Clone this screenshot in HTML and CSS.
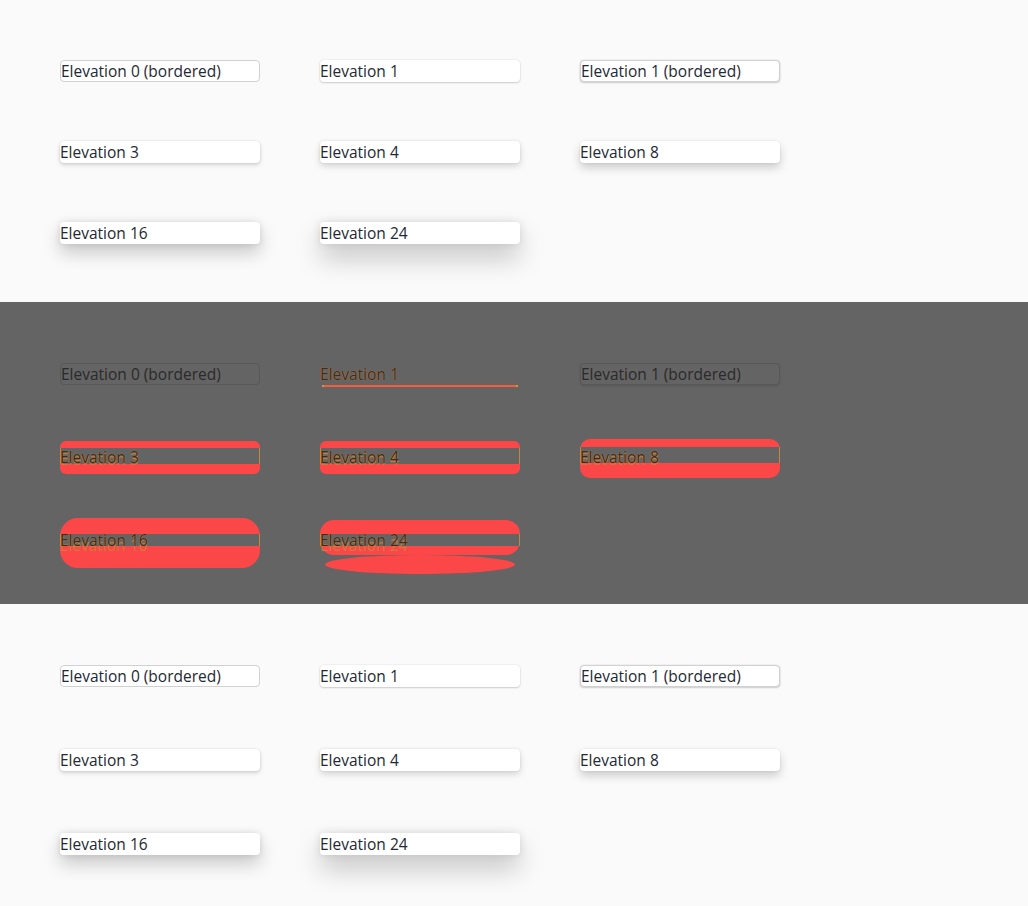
FILE: index.html
```html
<!DOCTYPE html>
<html>
<head>
<meta charset="utf-8">
<link rel="stylesheet" href="styles.css">
</head>
<body>
<section class="panel panel-top">
  <div class="grid">
    <div class="card bordered">Elevation 0 (bordered)</div>
    <div class="card e1">Elevation 1</div>
    <div class="card bordered e1">Elevation 1 (bordered)</div>
    <div class="card e3">Elevation 3</div>
    <div class="card e4">Elevation 4</div>
    <div class="card e8">Elevation 8</div>
    <div class="card e16">Elevation 16</div>
    <div class="card e24">Elevation 24</div>
  </div>
</section>
<section class="panel panel-diff">
  <div class="grid grid-diff">
    <div class="dcard dbordered"><span class="dlabel">Elevation 0 (bordered)</span></div>
    <div class="dcard d1"><span class="dlabel warm">Elevation 1</span><span class="dline"></span></div>
    <div class="dcard dbordered dshadow"><span class="dlabel">Elevation 1 (bordered)</span></div>
    <div class="dcard d3"><span class="red"></span><span class="band"></span><span class="dlabel warm ghosted">Elevation 3</span></div>
    <div class="dcard d4"><span class="red"></span><span class="band"></span><span class="dlabel warm ghosted">Elevation 4</span></div>
    <div class="dcard d8"><span class="red"></span><span class="band"></span><span class="dlabel warm ghosted">Elevation 8</span></div>
    <div class="dcard d16"><span class="red"></span><span class="band"></span><span class="dlabel warm ghosted2">Elevation 16</span></div>
    <div class="dcard d24"><span class="red"></span><span class="red2"></span><span class="band"></span><span class="dlabel warm ghosted2">Elevation 24</span></div>
  </div>
</section>
<section class="panel panel-bottom">
  <div class="grid grid-bottom">
    <div class="card bordered">Elevation 0 (bordered)</div>
    <div class="card e1">Elevation 1</div>
    <div class="card bordered e1">Elevation 1 (bordered)</div>
    <div class="card e3">Elevation 3</div>
    <div class="card e4">Elevation 4</div>
    <div class="card e8">Elevation 8</div>
    <div class="card e16">Elevation 16</div>
    <div class="card e24">Elevation 24</div>
  </div>
</section>
</body>
</html>
```

FILE: styles.css
```css
html, body {
  margin: 0;
  padding: 0;
}
body {
  width: 1028px;
  font-family: "Open Sans", "Noto Sans", sans-serif;
  font-size: 15.5px;
  color: #242424;
}
.panel {
  height: 302px;
  box-sizing: border-box;
  overflow: hidden;
}
.panel-top, .panel-bottom {
  background: #fafafa;
}
.panel-top {
  padding: 60px 0 0 60px;
}
.panel-diff {
  background: #646464;
  padding: 61px 0 0 60px;
}
.panel-bottom {
  padding: 61px 0 0 60px;
}
.grid {
  display: grid;
  grid-template-columns: repeat(3, 200px);
  column-gap: 60px;
  row-gap: 59px;
}
.grid-diff {
  row-gap: 61px;
}
.grid-bottom {
  row-gap: 62px;
}
.card {
  height: 22px;
  box-sizing: border-box;
  background: #ffffff;
  border-radius: 4px;
  line-height: 22px;
  white-space: nowrap;
  color: #242833;
}
.card.bordered {
  border: 1px solid #d1d1d1;
  line-height: 20px;
}
.e1 { box-shadow: 0 0 2px rgba(0,0,0,0.12), 0 1px 2px rgba(0,0,0,0.16); }
.e3 { box-shadow: 0 0 2px rgba(0,0,0,0.12), 0 2px 4px rgba(0,0,0,0.16); }
.e4 { box-shadow: 0 0 2px rgba(0,0,0,0.12), 0 3px 7px rgba(0,0,0,0.16); }
.e8 { box-shadow: 0 0 2px rgba(0,0,0,0.12), 0 5px 10px rgba(0,0,0,0.18); }
.e16 { box-shadow: 0 0 6px rgba(0,0,0,0.12), 0 9px 18px rgba(0,0,0,0.2); }
.e24 { box-shadow: 0 0 8px rgba(0,0,0,0.12), 0 14px 26px rgba(0,0,0,0.22); }

/* diff panel */
.dcard {
  position: relative;
  height: 22px;
  box-sizing: border-box;
  border-radius: 4px;
  line-height: 22px;
  white-space: nowrap;
  background: #646464;
}
.dbordered {
  border: 1px solid #585858;
  line-height: 20px;
}
.dshadow {
  box-shadow: 0 1px 2px rgba(0,0,0,0.12);
}
.dlabel {
  position: relative;
  z-index: 3;
  color: #2a2a2a;
}
.dlabel.warm {
  color: #3a2c22;
  text-shadow: 0 0 1px #e0883a;
}
.dlabel.ghosted {
  text-shadow: 0 0 1px #e0883a, 0 2px 0 rgba(200,132,58,0.8);
}
.dlabel.ghosted2 {
  text-shadow: 0 0 1px #e0883a, 0 5px 0 rgba(200,132,58,0.85);
}
.dline {
  position: absolute;
  left: 2px;
  right: 2px;
  bottom: -2px;
  height: 2px;
  background: #f0603c;
  border-left: 2px solid #d8903a;
  border-right: 2px solid #d8903a;
}
.red, .red2 {
  position: absolute;
  background: #fb4747;
  z-index: 1;
}
.band {
  position: absolute;
  left: 0;
  right: 0;
  background: #646464;
  z-index: 2;
  border-left: 1px solid #c8843a;
  border-right: 1px solid #c8843a;
}
.d3 .red { left: 0; right: 0; top: -5px; bottom: -6px; border-radius: 6px; }
.d3 .band { top: 2px; bottom: 4px; }
.d4 .red { left: 0; right: 0; top: -5px; bottom: -6px; border-radius: 6px; }
.d4 .band { top: 2px; bottom: 4px; }
.d8 .red { left: 0; right: 0; top: -7px; bottom: -10px; border-radius: 10px; }
.d8 .band { top: 1px; bottom: 5px; }
.d16 .red { left: 0; right: 0; top: -11px; bottom: -17px; border-radius: 18px; }
.d16 .band { top: 5px; bottom: 5px; }
.d24 .red { left: 0; right: 0; top: -9px; bottom: -4px; border-radius: 14px; }
.d24 .red2 { left: 5px; right: 5px; top: 26px; height: 19px; border-radius: 50%; }
.d24 .band { top: 5px; bottom: 5px; }
```
